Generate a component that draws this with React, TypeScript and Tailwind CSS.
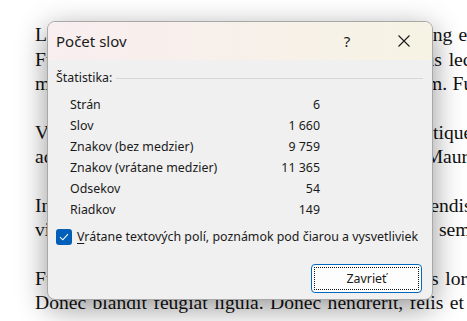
import React from 'react'

// each line with a word-spacing tweak so the words under the dialog edge line up
const paragraphs: [string, string][][] = [
  [
    ['Lorem ipsum dolor sit amet, consectetuer adipiscing elit. Maecenas porttitor congue massa.', '[word-spacing:1.1px]'],
    ['Fusce posuere, magna sed pulvinar ultricies, purus lectus malesuada libero, sit amet commodo', '[word-spacing:1.8px]'],
    ['magna eros quis urna. Nunc viverra imperdiet enim. Fusce est.', '[word-spacing:0.5px]'],
  ],
  [
    ['Vivamus a tellus. Pellentesque habitant morbi tristique senectus et netus et malesuada fames', '[word-spacing:1.5px]'],
    ['ac turpis egestas. Proin pharetra nonummy pede. Mauris et orci. Aenean nec lorem.', '[word-spacing:0.7px]'],
  ],
  [
    ['In porttitor. Donec laoreet nonummy augue. Suspendisse dui purus, scelerisque at, vulputate', '[word-spacing:1.3px]'],
    ['vitae, pretium mattis, nunc. Mauris eget neque at sem venenatis eleifend. Ut nonummy.', '[word-spacing:2px]'],
  ],
  [
    ['Fusce aliquet pede non pede. Suspendisse dapibus lorem pellentesque magna. Integer nulla.', '[word-spacing:1.7px]'],
    ['Donec blandit feugiat ligula. Donec hendrerit, felis et imperdiet euismod, purus ipsum pretium metus,', '[word-spacing:1.5px]'],
  ],
]

const stats: [string, string][] = [
  ['Strán', '6'],
  ['Slov', '1 660'],
  ['Znakov (bez medzier)', '9 759'],
  ['Znakov (vrátane medzier)', '11 365'],
  ['Odsekov', '54'],
  ['Riadkov', '149'],
]

export default function App() {
  return (
    <div className="relative w-[467px] h-[321px] overflow-hidden bg-white">
      {/* Document behind the dialog */}
      <div className="pl-[35px] pt-[23px] text-[19.6px] leading-[24.5px] text-[#111] font-['Liberation_Serif','Times_New_Roman',serif]">
        {paragraphs.map((lines, i) => (
          <div key={i} className="mb-[24px]">
            {lines.map(([line, spacing], j) => (
              <div key={j} className={`whitespace-nowrap ${spacing}`}>{line}</div>
            ))}
          </div>
        ))}
      </div>

      {/* Word count dialog */}
      <div className="absolute left-[47px] top-[21px] w-[386px] h-[279px] flex flex-col rounded-[8px] border border-[#a8a8a8] bg-[#f0f0f0] overflow-hidden shadow-[0_8px_30px_rgba(0,0,0,0.42)] font-['Noto_Sans',sans-serif] text-[#1a1a1a]">
        {/* Title bar */}
        <div className="h-[38px] flex items-center pl-[8px] bg-gradient-to-r from-[#f9eef0] to-[#f6f3e4]">
          <span className="text-[15px] leading-none">Počet slov</span>
          <span className="ml-auto text-[15px] leading-none w-[20px] text-center">?</span>
          <svg className="ml-[41px] mr-[22px]" width="12" height="12" viewBox="0 0 12 12">
            <path d="M0.5 0.5 L11.5 11.5 M11.5 0.5 L0.5 11.5" stroke="#1a1a1a" strokeWidth="1.1" />
          </svg>
        </div>

        {/* Body */}
        <div className="flex-1 flex flex-col pl-[8px] pr-[9px] pt-[10px] text-[12.4px] leading-[16px]">
          <div className="flex items-center gap-[4px]">
            <span>Štatistika:</span>
            <div className="flex-1 h-px bg-[#d6d6d6]" />
          </div>

          <div className="mt-[8px] ml-[14px] w-[250px] grid grid-cols-[1fr_auto]">
            {stats.map(([label, value]) => (
              <React.Fragment key={label}>
                <span className="h-[21px] flex items-center">{label}</span>
                <span className="h-[21px] flex items-center justify-end">{value}</span>
              </React.Fragment>
            ))}
          </div>

          <label className="mt-[9px] flex items-center gap-[5px] h-[16px]">
            <span className="w-[16px] h-[16px] rounded-[3px] bg-[#005fb8] flex items-center justify-center">
              <svg width="10" height="8" viewBox="0 0 10 8">
                <path d="M1 4.2 L3.8 6.8 L9 1.2" fill="none" stroke="white" strokeWidth="1.1" />
              </svg>
            </span>
            <span className="whitespace-nowrap"><span className="underline underline-offset-2">V</span>rátane textových polí, poznámok pod čiarou a vysvetliviek</span>
          </label>

          <button className="mt-[19px] self-end mr-[1px] w-[111px] h-[29px] rounded-[4px] border-[1.5px] border-[#0067c0] bg-[#fdfdfd] p-[2px]">
            <span className="w-full h-full flex items-center justify-center border border-dotted border-[#111] text-[12.4px]">Zavrieť</span>
          </button>
        </div>
      </div>
    </div>
  )
}
